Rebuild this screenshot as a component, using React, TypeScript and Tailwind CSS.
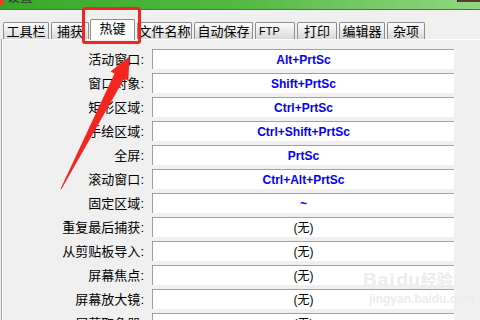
const TABS = [
  { label: "工具栏", w: "w-[46px]" },
  { label: "捕获", w: "w-[38px]" },
  { label: "热键", w: "w-[45px]", active: true },
  { label: "文件名称", w: "w-[55px]" },
  { label: "自动保存", w: "w-[59px]" },
  { label: "FTP", w: "w-[40px]", latin: true },
  { label: "打印", w: "w-[40px]" },
  { label: "编辑器", w: "w-[46px]" },
  { label: "杂项", w: "w-[38px]" },
];

const HOTKEYS: [string, string][] = [
  ["活动窗口", "Alt+PrtSc"],
  ["窗口对象", "Shift+PrtSc"],
  ["矩形区域", "Ctrl+PrtSc"],
  ["手绘区域", "Ctrl+Shift+PrtSc"],
  ["全屏", "PrtSc"],
  ["滚动窗口", "Ctrl+Alt+PrtSc"],
  ["固定区域", "~"],
  ["重复最后捕获", ""],
  ["从剪贴板导入", ""],
  ["屏幕焦点", ""],
  ["屏幕放大镜", ""],
  ["屏幕取色器", ""],
];

const FONT = { fontFamily: '"Liberation Sans", "Noto Sans CJK SC", sans-serif' };

export default function App() {
  return (
    <div
      className="relative w-[480px] h-[320px] overflow-hidden bg-[#f0f0f0] text-black"
      style={FONT}
    >
      {/* Title bar */}
      <div className="flex items-start h-[10px] overflow-hidden border-b border-[#2f8a25] bg-gradient-to-r from-[#36a829] via-[#52b941] to-[#92d783]">
        <div className="w-[4px] h-[5px] bg-[#e8402c] rounded-br-[2px]" />
        <span className="ml-[3px] -mt-[10px] text-[13px] leading-[13px] text-[#2c3a2a]">设置</span>
        <div className="ml-auto w-[23px] h-[2px] bg-[#5c3b2e] border-l border-[#3a2018]" />
      </div>

      {/* Tabs */}
      <div className="flex items-end gap-[2px] h-[29px] pl-[3px]">
        {TABS.map((t) =>
          t.active ? (
            <div
              key={t.label}
              className={`relative z-10 ${t.w} -ml-[1px] h-[21px] -mb-[1px] flex items-center justify-center pb-[3px] bg-white border border-b-0 border-[#8c8c8c] rounded-t-[2px] text-[13px] leading-none`}
            >
              {t.label}
            </div>
          ) : (
            <div
              key={t.label}
              className={`${t.w} h-[17px] flex items-center ${t.latin ? "justify-start pl-[3px] text-[11px]" : "justify-center text-[13px]"} bg-gradient-to-b from-[#fcfcfc] to-[#d9d9d9] border border-b-0 border-[#8c8c8c] rounded-t-[2px] leading-none`}
            >
              {t.label}
            </div>
          )
        )}
      </div>

      {/* Panel */}
      <div className="ml-[1px] h-[281px] border-l border-[#a0a0a0] shadow-[inset_1px_1px_0_#ffffff] pt-[10px]">
        <div className="grid grid-cols-[142px_302px] gap-x-[8px] gap-y-[4px]">
          {HOTKEYS.map(([label, key]) => (
            <div key={label} className="contents">
              <div className="h-[20px] flex items-center justify-end text-[13px] leading-none">
                {label}:
              </div>
              <div className="h-[20px] flex items-center justify-center bg-white border-t border-l border-[#a0a0a0]">
                {key ? (
                  <span className="text-[12px] font-bold text-[#0000ff] leading-none">{key}</span>
                ) : (
                  <span className="text-[12px] leading-none">(无)</span>
                )}
              </div>
            </div>
          ))}
        </div>
      </div>

      {/* Red highlight around the active tab */}
      <div className="absolute left-[82px] top-[7px] w-[59px] h-[37px] border-[3px] border-[#f2261f] rounded-[3px]" />

      {/* Red arrow */}
      <svg className="absolute left-0 top-0" width="480" height="320" viewBox="0 0 480 320">
        <polygon
          points="129.5,56.5 128.3,80.7 124.3,78.6 61.4,189.2 60.6,188.8 114.5,73.6 110.5,71.5"
          fill="#f2261f"
        />
      </svg>

      {/* Watermark */}
      <div className="absolute left-[363px] top-[270px] flex flex-col items-start text-[#ececec] leading-none">
        <div className="flex items-end gap-[1px]">
          <span className="text-[19px] font-bold tracking-[1px]">Bai</span>
          <span className="text-[19px] font-bold">du</span>
          <span className="text-[16px] font-bold">经验</span>
        </div>
        <span className="mt-[4px] ml-[6px] text-[12px] font-bold">jingyan.baidu.com</span>
      </div>
    </div>
  );
}
